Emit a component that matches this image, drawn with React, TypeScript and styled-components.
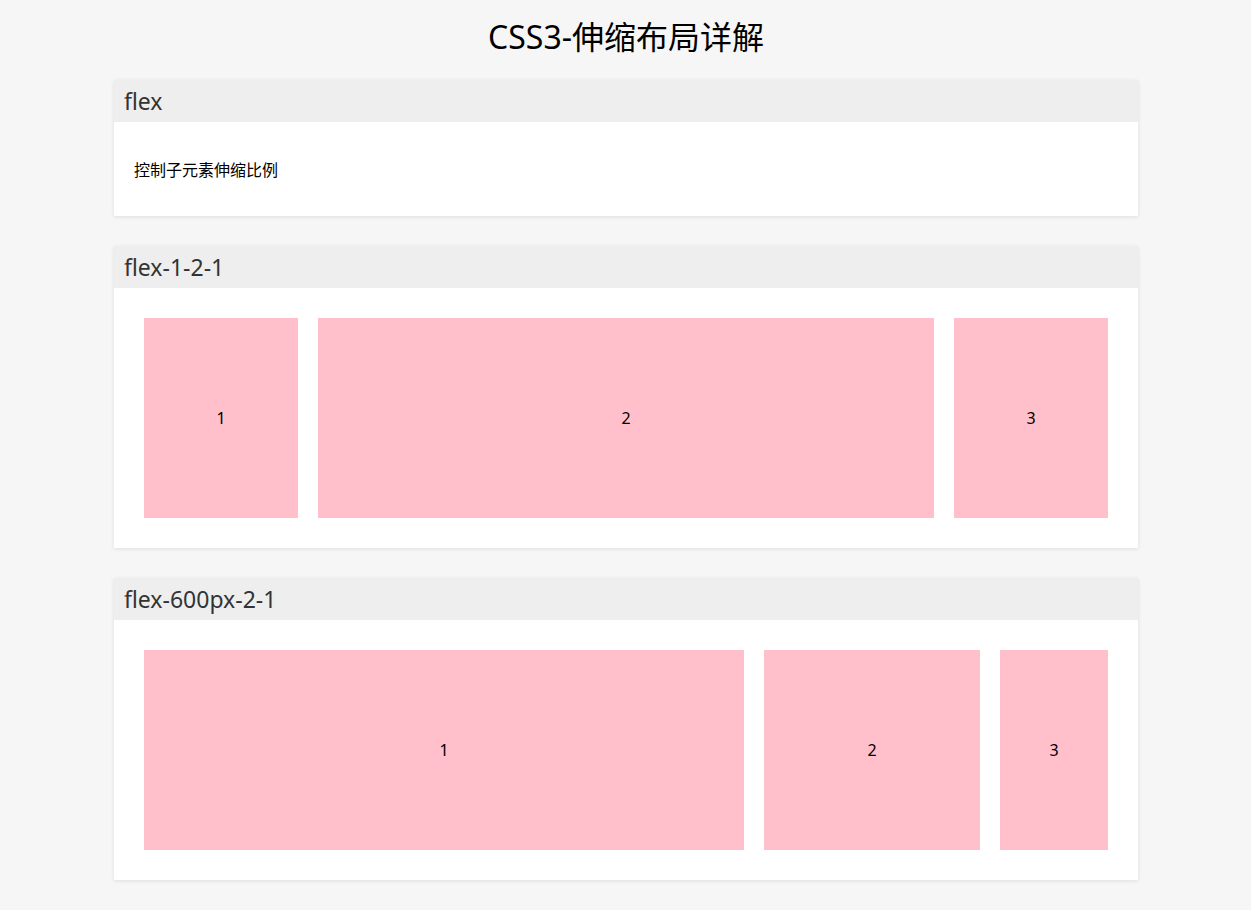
import React from "react";
import styled, { createGlobalStyle } from "styled-components";

const Global = createGlobalStyle`
  html, body { margin: 0; padding: 0; background: #f6f6f6; }
  body { font-family: "Noto Sans", "Noto Sans CJK SC", sans-serif; color: #000; }
`;

const Page = styled.div`
  width: 1024px;
  margin: 0 0 0 calc(50% - 511.5px);
  padding-bottom: 30px;
`;

const Title = styled.h1`
  margin: 0;
  height: 80px;
  line-height: 73px;
  text-align: center;
  font-size: 32px;
  font-weight: normal;
  font-family: "Noto Sans", "Noto Sans CJK SC", sans-serif;
`;

const Panel = styled.section`
  background: #fff;
  box-shadow: 0 1px 4px rgba(0, 0, 0, 0.1);
  margin-bottom: 30px;
`;

const PanelHeader = styled.h2`
  margin: 0;
  height: 42px;
  line-height: 42px;
  padding: 0 10px;
  background: #eeeeee;
  color: #333;
  font-size: 23px;
  font-weight: normal;
`;

const PanelBody = styled.div`
  padding: 20px;
`;

const Text = styled.p`
  margin: 18px 0 15px;
  font-size: 16px;
  line-height: 21px;
`;

const Row = styled.div`
  display: flex;
`;

const Box = styled.div<{ $grow?: number; $basis?: string }>`
  flex: ${(p) => (p.$basis ? `0 0 ${p.$basis}` : `${p.$grow ?? 1} 1 0`)};
  height: 200px;
  margin: 10px;
  background: pink;
  display: flex;
  align-items: center;
  justify-content: center;
  font-size: 16px;
  line-height: 20px;
  padding-bottom: 1px;
  box-sizing: border-box;
`;

export default function App() {
  return (
    <>
      <Global />
      <Page>
        <Title>CSS3-伸缩布局详解</Title>
        <Panel>
          <PanelHeader>flex</PanelHeader>
          <PanelBody>
            <Text>控制子元素伸缩比例</Text>
          </PanelBody>
        </Panel>
        <Panel>
          <PanelHeader>flex-1-2-1</PanelHeader>
          <PanelBody>
            <Row>
              <Box $grow={1}>1</Box>
              <Box $grow={4}>2</Box>
              <Box $grow={1}>3</Box>
            </Row>
          </PanelBody>
        </Panel>
        <Panel>
          <PanelHeader>flex-600px-2-1</PanelHeader>
          <PanelBody>
            <Row>
              <Box $basis="600px">1</Box>
              <Box $grow={2}>2</Box>
              <Box $grow={1}>3</Box>
            </Row>
          </PanelBody>
        </Panel>
      </Page>
    </>
  );
}
